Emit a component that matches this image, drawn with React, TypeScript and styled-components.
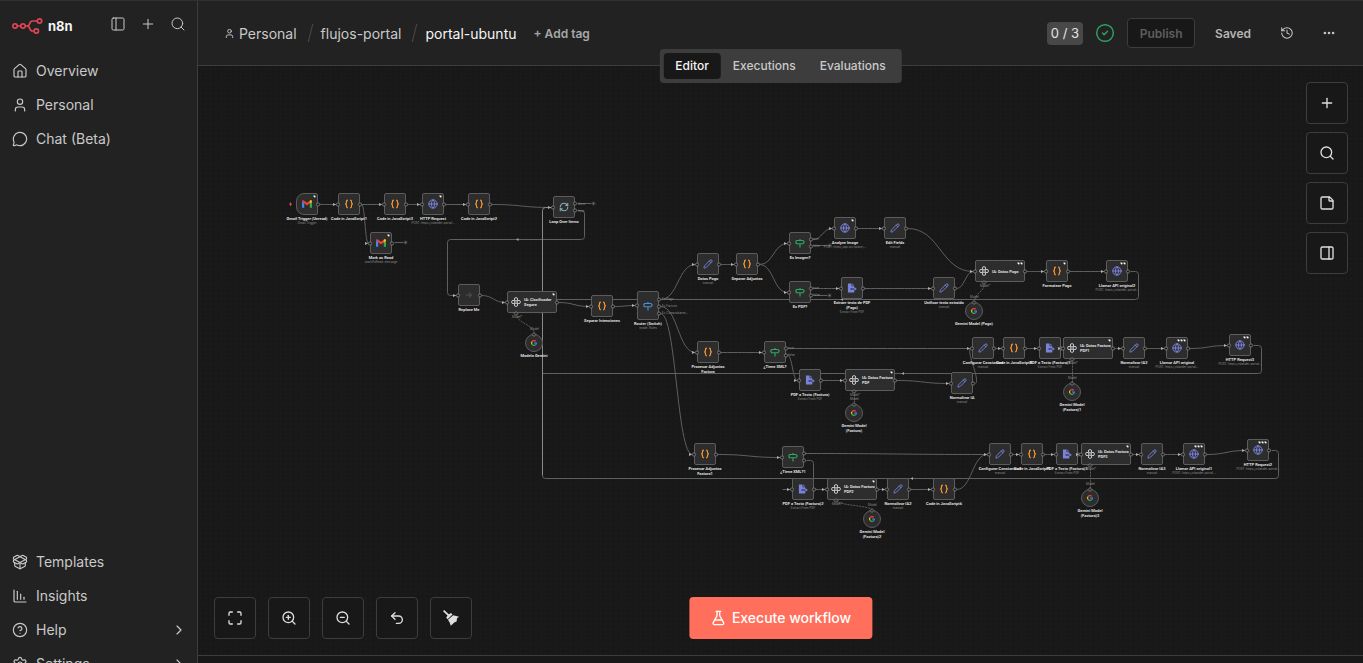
import React from "react";
import styled, { createGlobalStyle, css } from "styled-components";
import {
  ChartColumnDecreasing,
  ChevronRight,
  CircleCheck,
  CircleHelp,
  Ellipsis,
  FlaskConical,
  Globe,
  History,
  House,
  Maximize,
  MessageCircle,
  PackageOpen,
  PanelLeft,
  PanelRight,
  Pencil,
  Plus,
  RefreshCw,
  Search,
  Settings,
  StickyNote,
  Undo2,
  User,
  ZoomIn,
  ZoomOut,
} from "lucide-react";

const color = {
  panel: "#222222",
  canvas: "#181818",
  node: "#2d2d2d",
  border: "#3d3d3d",
  nodeBorder: "#5c5c5c",
  edge: "#5f5f5f",
  text: "#c9c9c9",
  strong: "#f5f5f5",
  muted: "#8d8d8d",
  accent: "#ff6f5c",
};

const GlobalStyle = createGlobalStyle`
  * { box-sizing: border-box; }
  body {
    margin: 0;
    background: ${color.canvas};
    color: ${color.text};
    font-family: Inter, "Liberation Sans", sans-serif;
    font-size: 14px;
    overflow: hidden;
  }
  button { font-family: inherit; padding: 0; cursor: pointer; }
  a { color: inherit; text-decoration: none; }
`;

/* ---------- Shell ---------- */

const Shell = styled.div`
  display: flex;
  height: 100vh;
  border-top: 1px solid #303033;
`;

const Sidebar = styled.aside`
  flex: 0 0 198px;
  background: ${color.panel};
  border-right: 1px solid ${color.border};
  overflow: hidden;
`;

const SidebarContent = styled.div`
  display: flex;
  flex-direction: column;
  min-height: calc(100% + 18px);
`;

const SidebarTop = styled.div`
  display: flex;
  align-items: center;
  height: 53px;
  padding: 0 11px 3px 12px;
`;

const Brand = styled.a`
  display: flex;
  align-items: center;
  gap: 4px;
  color: ${color.strong};
  font-size: 13px;
  font-weight: 700;
`;

const SidebarTools = styled.div`
  display: flex;
  gap: 14px;
  margin-left: auto;
  padding-bottom: 4px;
`;

const IconButton = styled.button`
  display: flex;
  align-items: center;
  justify-content: center;
  width: 16px;
  height: 16px;
  border: 0;
  background: none;
  color: ${color.text};
`;

const NavList = styled.nav<{ $bottom?: boolean }>`
  display: flex;
  flex-direction: column;
  margin-top: ${(p) => (p.$bottom ? "auto" : "0")};
`;

const NavItem = styled.a`
  display: flex;
  align-items: center;
  gap: 8px;
  height: 34px;
  padding: 0 10px 0 12px;
  line-height: 20px;
`;

const NavText = styled.span`
  flex: 1;
`;

const Main = styled.main`
  flex: 1;
  display: flex;
  flex-direction: column;
  min-width: 0;
`;

/* ---------- Header ---------- */

const Header = styled.header`
  position: relative;
  z-index: 2;
  display: flex;
  align-items: center;
  flex: 0 0 65px;
  padding: 0 26px;
  background: ${color.panel};
  border-bottom: 1px solid ${color.border};
`;

const Breadcrumbs = styled.nav`
  display: flex;
  align-items: center;
  gap: 10px;
`;

const Crumb = styled.a<{ $current?: boolean }>`
  display: flex;
  align-items: center;
  gap: 4px;
  color: ${(p) => (p.$current ? color.strong : color.text)};
`;

const Slash = styled.span`
  width: 4px;
  height: 18px;
  border-right: 1px solid #4a4a4a;
  transform: skewX(-14deg);
`;

const AddTag = styled.button`
  margin-left: 7px;
  border: 0;
  background: none;
  color: #a8a8a8;
  font-size: 12px;
  font-weight: 600;
`;

const HeaderActions = styled.div`
  display: flex;
  align-items: center;
  margin-left: auto;
`;

const Counter = styled.span`
  padding: 0 4px;
  border-radius: 4px;
  background: #484848;
  color: #e4e4e4;
  font-size: 13px;
  line-height: 23px;
`;

const Valid = styled.span`
  display: flex;
  margin: 0 12px;
  color: #2fa065;
`;

const Publish = styled.button`
  width: 68px;
  height: 30px;
  border: 1px solid ${color.border};
  border-radius: 4px;
  background: ${color.canvas};
  color: #5e5e5e;
  font-size: 12px;
  font-weight: 600;
`;

const Saved = styled.span`
  margin: 0 28px 0 20px;
  color: #b4b4b4;
  font-size: 12px;
  font-weight: 600;
`;

const MoreSlot = styled.span`
  margin-left: 26px;
`;

const Tabs = styled.div`
  position: absolute;
  top: 48px;
  left: 50%;
  transform: translateX(-50%);
  display: flex;
  padding: 4px;
  border-radius: 4px;
  background: ${color.border};
`;

const Tab = styled.button<{ $active?: boolean }>`
  height: 26px;
  padding: 0 12px 2px;
  border: 0;
  border-radius: 4px;
  background: ${(p) => (p.$active ? color.canvas : "transparent")};
  color: ${(p) => (p.$active ? color.strong : color.text)};
  font-size: 12px;
  font-weight: 500;
`;

/* ---------- Canvas ---------- */

const Canvas = styled.section`
  position: relative;
  flex: 1;
  overflow: hidden;
  background: radial-gradient(circle, #1c1c1c 1px, transparent 1px) 0 0 / 5px 5px ${color.canvas};
`;

const LogsPanel = styled.footer`
  flex: 0 0 8px;
  border-top: 1px solid ${color.border};
  background: ${color.canvas};
`;

const ToolButton = styled.button`
  display: flex;
  align-items: center;
  justify-content: center;
  width: 42px;
  height: 42px;
  border: 1px solid ${color.border};
  border-radius: 4px;
  background: ${color.canvas};
  color: #dedede;
`;

const SideTools = styled.div`
  position: absolute;
  top: 16px;
  right: 15px;
  display: flex;
  flex-direction: column;
  gap: 8px;
`;

const BottomTools = styled.div`
  position: absolute;
  left: 16px;
  bottom: 16px;
  display: flex;
  gap: 12px;
`;

const Execute = styled.button`
  position: absolute;
  bottom: 16px;
  left: 50%;
  transform: translateX(-50%);
  display: flex;
  align-items: center;
  justify-content: center;
  gap: 6px;
  height: 42px;
  padding: 0 21px 1px;
  border: 0;
  border-radius: 4px;
  background: ${color.accent};
  color: #ffffff;
  font-size: 14px;
  font-weight: 500;
  white-space: nowrap;
`;

const PAN = { x: -198, y: -66 };

const Viewport = styled.div`
  position: absolute;
  left: ${PAN.x}px;
  top: ${PAN.y}px;
  width: 1363px;
  height: 663px;
`;

const EdgeLayer = styled.svg`
  position: absolute;
  inset: 0;
  width: 100%;
  height: 100%;
  pointer-events: none;
`;

type Kind =
  | "gmail" | "code" | "http" | "loop" | "noop" | "ai" | "switch"
  | "edit" | "if" | "pdf" | "model";

const shapes = {
  model: css`width: 18px; height: 18px; border-radius: 50%;`,
  ai: css`width: 50px; height: 22px; padding-left: 3px; justify-content: flex-start;`,
  switch: css`width: 22px; height: 29px;`,
  plain: css`width: 22px; height: 22px;`,
};

const NodeBox = styled.div<{ $x: number; $y: number; $kind: Kind; $trigger?: boolean }>`
  position: absolute;
  left: ${(p) => p.$x}px;
  top: ${(p) => p.$y}px;
  display: flex;
  align-items: center;
  justify-content: center;
  border: 1px solid ${color.nodeBorder};
  border-radius: ${(p) => (p.$trigger ? "8px 2px 2px 8px" : "2px")};
  background: ${color.node};
  ${(p) => (p.$kind === "model" || p.$kind === "ai" || p.$kind === "switch" ? shapes[p.$kind] : shapes.plain)}
`;

const tinyTitle = css`
  color: #e8e8e8;
  font-family: Roboto, "Liberation Sans", sans-serif;
  font-size: 4px;
  font-weight: 600;
  line-height: 5px;
  white-space: pre;
`;

const Caption = styled.div`
  position: absolute;
  top: 100%;
  left: 50%;
  transform: translateX(-50%);
  padding-top: 2px;
  text-align: center;
  ${tinyTitle}
`;

const Subtitle = styled.div`
  color: ${color.muted};
  font-family: Inter, "Liberation Sans", sans-serif;
  font-size: 3px;
  font-weight: 400;
`;

const InnerTitle = styled.div`
  margin-left: 3px;
  ${tinyTitle}
`;

const Badges = styled.div`
  position: absolute;
  top: 1px;
  right: 1px;
  display: flex;
  color: #ffffff;
`;

const PortLabel = styled.span<{ $x: number; $y: number }>`
  position: absolute;
  left: ${(p) => p.$x}px;
  top: ${(p) => p.$y}px;
  color: ${color.muted};
  font-size: 3px;
  line-height: 4px;
  white-space: nowrap;
`;

interface FlowNode {
  id: string;
  kind: Kind;
  x: number;
  y: number;
  title: string;
  sub?: string;
  badges?: number;
  outs?: number;
}

const POST = "POST: https://islander-portal...";

const nodes: FlowNode[] = [
  { id: "trigger", kind: "gmail", x: 296, y: 193, title: "Gmail Trigger (Unread)", sub: "Gmail Trigger", badges: 1 },
  { id: "code1", kind: "code", x: 338, y: 193, title: "Code in JavaScript1" },
  { id: "code3", kind: "code", x: 384, y: 193, title: "Code in JavaScript3" },
  { id: "http", kind: "http", x: 422, y: 193, title: "HTTP Request", sub: POST, badges: 1 },
  { id: "code2", kind: "code", x: 468, y: 193, title: "Code in JavaScript2" },
  { id: "mark", kind: "gmail", x: 370, y: 232, title: "Mark as Read", sub: "markAsRead: message", badges: 1 },
  { id: "loop", kind: "loop", x: 553, y: 196, title: "Loop Over Items", outs: 2 },
  { id: "replace", kind: "noop", x: 458, y: 284, title: "Replace Me" },
  { id: "clas", kind: "ai", x: 507, y: 291, title: "IA: Clasificador\nSeguro", badges: 1 },
  { id: "gem", kind: "model", x: 525, y: 334, title: "Modelo Gemini" },
  { id: "sepint", kind: "code", x: 591, y: 295, title: "Separar Intenciones" },
  { id: "router", kind: "switch", x: 637, y: 291, title: "Router (Switch)", sub: "mode: Rules", outs: 3 },
  { id: "pago", kind: "edit", x: 697, y: 253, title: "Datos Pago", sub: "manual" },
  { id: "sepadj", kind: "code", x: 736, y: 253, title: "Separar Adjuntos" },
  { id: "esimg", kind: "if", x: 789, y: 232, title: "Es Imagen?", outs: 2 },
  { id: "analyze", kind: "http", x: 834, y: 217, title: "Analyze Image", sub: "POST: https://api.ocr.space/...", badges: 1 },
  { id: "fields", kind: "edit", x: 884, y: 217, title: "Edit Fields", sub: "manual" },
  { id: "espdf", kind: "if", x: 789, y: 281, title: "Es PDF?", outs: 2 },
  { id: "extraer", kind: "pdf", x: 841, y: 277, title: "Extraer texto de PDF\n(Pago)", sub: "Extract From PDF" },
  { id: "unificar", kind: "edit", x: 933, y: 277, title: "Unificar texto extraido", sub: "manual" },
  { id: "iapago", kind: "ai", x: 975, y: 260, title: "IA: Datos Pago", badges: 2 },
  { id: "gempago", kind: "model", x: 965, y: 302, title: "Gemini Model (Pago)" },
  { id: "format", kind: "code", x: 1046, y: 260, title: "Formatear Pago", badges: 1 },
  { id: "llamar2", kind: "http", x: 1106, y: 260, title: "Llamar API original2", sub: POST, badges: 2 },
  { id: "proc", kind: "code", x: 697, y: 341, title: "Procesar Adjuntos\nFactura" },
  { id: "xml", kind: "if", x: 764, y: 341, title: "¿Tiene XML?", outs: 2 },
  { id: "pdf", kind: "pdf", x: 799, y: 369, title: "PDF a Texto (Factura)", sub: "Extract From PDF" },
  { id: "iapdf", kind: "ai", x: 845, y: 369, title: "IA: Datos Factura\nPDF", badges: 1 },
  { id: "gemfac", kind: "model", x: 845, y: 404, title: "Gemini Model\n(Factura)" },
  { id: "norm", kind: "edit", x: 951, y: 372, title: "Normalizar IA", sub: "manual" },
  { id: "conf", kind: "edit", x: 972, y: 337, title: "Configurar Constantes", sub: "manual" },
  { id: "code4", kind: "code", x: 1003, y: 337, title: "Code in JavaScript4" },
  { id: "pdf1", kind: "pdf", x: 1039, y: 337, title: "PDF a Texto (Factura)1", sub: "Extract From PDF" },
  { id: "iapdf1", kind: "ai", x: 1063, y: 337, title: "IA: Datos Factura\nPDF1", badges: 1 },
  { id: "gemfac1", kind: "model", x: 1063, y: 383, title: "Gemini Model\n(Factura)1" },
  { id: "norm2", kind: "edit", x: 1123, y: 337, title: "Normalizar IA2", sub: "manual" },
  { id: "llamar", kind: "http", x: 1166, y: 337, title: "Llamar API original", sub: POST, badges: 3 },
  { id: "http3", kind: "http", x: 1229, y: 334, title: "HTTP Request3", sub: POST, badges: 2 },
  { id: "proc1", kind: "code", x: 694, y: 443, title: "Procesar Adjuntos\nFactura1" },
  { id: "xml1", kind: "if", x: 782, y: 446, title: "¿Tiene XML?1", outs: 2 },
  { id: "pdf2", kind: "pdf", x: 792, y: 478, title: "PDF a Texto (Factura)2", sub: "Extract From PDF" },
  { id: "iapdf2", kind: "ai", x: 827, y: 478, title: "IA: Datos Factura\nPDF2", badges: 1 },
  { id: "gemfac2", kind: "model", x: 863, y: 510, title: "Gemini Model\n(Factura)2" },
  { id: "norm12", kind: "edit", x: 887, y: 478, title: "Normalizar IA2", sub: "manual" },
  { id: "code6", kind: "code", x: 933, y: 478, title: "Code in JavaScript6" },
  { id: "conf1", kind: "edit", x: 989, y: 443, title: "Configurar Constantes1", sub: "manual" },
  { id: "code5", kind: "code", x: 1021, y: 443, title: "Code in JavaScript5" },
  { id: "pdf3", kind: "pdf", x: 1056, y: 443, title: "PDF a Texto (Factura)3", sub: "Extract From PDF" },
  { id: "iapdf3", kind: "ai", x: 1081, y: 443, title: "IA: Datos Factura\nPDF3", badges: 1 },
  { id: "gemfac3", kind: "model", x: 1081, y: 489, title: "Gemini Model\n(Factura)3" },
  { id: "norm3", kind: "edit", x: 1141, y: 443, title: "Normalizar IA3", sub: "manual" },
  { id: "llamar1", kind: "http", x: 1183, y: 443, title: "Llamar API original1", sub: POST, badges: 3 },
  { id: "http2", kind: "http", x: 1247, y: 439, title: "HTTP Request2", sub: POST, badges: 3 },
];

const byId = Object.fromEntries(nodes.map((n) => [n.id, n]));

/* [source, target, output index] */
const links: [string, string, number?][] = [
  ["trigger", "code1"], ["code1", "code3"], ["code3", "http"], ["http", "code2"], ["code2", "loop"],
  ["code1", "mark"], ["replace", "clas"], ["clas", "sepint"], ["sepint", "router"],
  ["router", "pago", 0], ["router", "proc", 1], ["router", "proc1", 2],
  ["pago", "sepadj"], ["sepadj", "esimg"], ["sepadj", "espdf"],
  ["esimg", "analyze", 0], ["analyze", "fields"], ["fields", "iapago"],
  ["espdf", "extraer", 0], ["extraer", "unificar"], ["unificar", "iapago"],
  ["iapago", "format"], ["format", "llamar2"],
  ["proc", "xml"], ["xml", "conf", 0], ["xml", "pdf", 1], ["pdf", "iapdf"], ["iapdf", "norm"],
  ["conf", "code4"], ["code4", "pdf1"], ["iapdf1", "norm2"], ["norm2", "llamar"], ["llamar", "http3"],
  ["proc1", "xml1"], ["xml1", "conf1", 0], ["pdf2", "iapdf2"], ["iapdf2", "norm12"],
  ["norm12", "code6"], ["code6", "conf1"],
  ["conf1", "code5"], ["code5", "pdf3"], ["iapdf3", "norm3"], ["norm3", "llamar1"], ["llamar1", "http2"],
];

const modelLinks: [string, string][] = [
  ["clas", "gem"], ["iapago", "gempago"], ["iapdf", "gemfac"],
  ["iapdf1", "gemfac1"], ["iapdf2", "gemfac2"], ["iapdf3", "gemfac3"],
];

/* Orthogonal return paths that do not follow the plain curve. */
const returns = [
  "M577 210 H581 Q584 210 584 213 V236 Q584 239 581 239 H450 Q447 239 447 242 V292 Q447 295 450 295 H456",
  "M1130 271 H1135 Q1138 271 1138 274 V296 Q1138 299 1135 299 H542",
  "M1253 345 H1258 Q1261 345 1261 348 V370 Q1261 373 1258 373 H542",
  "M1271 450 H1275 Q1278 450 1278 453 V475 Q1278 478 1275 478 H545 Q542 478 542 475",
  "M806 460 H810 Q813 460 813 463 V478",
  "M782 489 H790",
  "M975 383 C980 380 966 352 970 348",
];

const stubs: [number, number, number][] = [
  [577, 203, 593], [394, 242, 405], [813, 245, 829], [813, 295, 829],
];

const portLabels: [number, number, string][] = [
  [662, 297, "Es Pago"], [662, 304, "Es Factura"], [662, 311, "Es Comprobante..."],
  [578, 202, "done"], [578, 209, "loop"],
  [813, 237, "true"], [813, 244, "false"], [813, 286, "true"], [813, 293, "false"],
  [788, 346, "true"], [788, 353, "false"],
];

const height = (n: FlowNode) => (n.kind === "switch" ? 29 : n.kind === "model" ? 18 : 22);
const width = (n: FlowNode) => (n.kind === "ai" ? 50 : n.kind === "model" ? 18 : 22);
const inY = (n: FlowNode) => n.y + Math.floor(height(n) / 2);
const outY = (n: FlowNode, i = 0) =>
  n.outs === 3 ? n.y + 8 + i * 7 : n.outs === 2 ? n.y + 7 + i * 7 : inY(n);

function curve(a: FlowNode, b: FlowNode, i?: number) {
  const x1 = a.x + width(a) + 1;
  const y1 = outY(a, i);
  const x2 = b.x - 2;
  const y2 = inY(b);
  const mid = (x1 + x2) / 2;
  return `M${x1} ${y1} C${mid} ${y1} ${mid} ${y2} ${x2} ${y2}`;
}

function Edges() {
  return (
    <EdgeLayer fill="none" stroke={color.edge}>
      <g transform="translate(.5 .5)">
        {links.map(([a, b, i]) => (
          <path key={a + b} d={curve(byId[a], byId[b], i)} />
        ))}
        {returns.map((d) => (
          <path key={d} d={d} />
        ))}
        <path d="M542 475 V210 Q542 207 545 207 H551" stroke="#8a8a8a" />
        {modelLinks.map(([a, b]) => {
          const x1 = byId[a].x + 9;
          const y1 = byId[a].y + 22;
          const x2 = byId[b].x + 9;
          const y2 = byId[b].y;
          const m = (y1 + y2) / 2;
          return <path key={a} strokeDasharray="2 1" d={`M${x1} ${y1} C${x1} ${m} ${x2} ${m} ${x2} ${y2}`} />;
        })}
        {stubs.map(([x1, y, x2]) => (
          <g key={`${x1}-${y}`}>
            <path d={`M${x1} ${y}H${x2 - 2}`} />
            <rect x={x2 - 2} y={y - 2} width="4" height="4" rx="1" fill="#303030" stroke="none" />
            <path d={`M${x2 - 1} ${y}h2M${x2} ${y - 1}v2`} stroke="#909090" strokeWidth=".6" />
          </g>
        ))}
        <g fill="#a5a5a5" stroke="none">
          <path d="M515.500 239l2.500-1.500v3z" />
          <path d="M840 299l2.500-1.500v3z" />
          <path d="M901 373l2.500-1.500v3z" />
          <path d="M910 478l2.500-1.500v3z" />
        </g>
      </g>
    </EdgeLayer>
  );
}

function Handles() {
  return (
    <EdgeLayer fill={color.canvas} stroke="#858585" strokeWidth=".8">
      <g transform="translate(0 .5)">
        {nodes.map((n) => {
          if (n.kind === "model") {
            return <path key={n.id} d={`M${n.x + 9} ${n.y - 2}l2 2-2 2-2-2z`} fill={color.node} />;
          }
          const outs = Array.from({ length: n.outs ?? 1 }, (_, i) => outY(n, i));
          return (
            <g key={n.id}>
              {n.id !== "trigger" && (
                <>
                  <circle cx={n.x} cy={inY(n)} r="1.600" />
                  <path d={`M${n.x - 2} ${inY(n)}l-3-1.600v3.200z`} fill="#b0b0b0" stroke="none" />
                </>
              )}
              {outs.map((y) => (
                <circle key={y} cx={n.x + width(n)} cy={y} r="1.600" />
              ))}
              {n.kind === "ai" && <path d={`M${n.x + 9} ${n.y + 20}l2 2-2 2-2-2z`} fill={color.node} />}
            </g>
          );
        })}
        <path d="M291 201l-2 3h1.500l-.5 2.300 2-3h-1.500z" fill={color.accent} stroke="none" />
      </g>
    </EdgeLayer>
  );
}

const indigo = "#7a83dc";

function NodeIcon({ kind }: { kind: Kind }) {
  switch (kind) {
    case "gmail":
      return (
        <svg width="10" height="8" viewBox="0 0 20 15">
          <path d="M0 2v13h4.500V5.500z" fill="#4285f4" />
          <path d="M20 2v13h-4.500V5.500z" fill="#34a853" />
          <path d="M0 2.500C0 .3 2.500-.6 4.300.8L10 5l5.700-4.200C17.500-.6 20 .3 20 2.500L10 10.500z" fill="#ea4335" />
          <path d="M15.500 1v6L20 3.500v-1C20 .2 17.500-.6 15.500 1z" fill="#fbbc04" />
        </svg>
      );
    case "code":
      return (
        <svg width="10" height="10" viewBox="0 0 22 22" fill="none" stroke="#ff9b33" strokeWidth="2.600">
          <path d="M8.500 2.500C5.500 2.500 5.500 4 5.500 6.500S5 11 2.500 11c2.500 0 3 2 3 4.500s0 4 3 4M13.500 2.500c3 0 3 1.500 3 4s.5 4.500 3 4.500c-2.500 0-3 2-3 4.500s0 4-3 4" />
        </svg>
      );
    case "http":
      return <Globe size={10} color={indigo} strokeWidth={2.4} />;
    case "edit":
      return <Pencil size={10} color={indigo} strokeWidth={2.2} />;
    case "loop":
      return <RefreshCw size={10} color="#86a9bd" strokeWidth={2.6} />;
    case "noop":
      return (
        <svg width="8" height="8" viewBox="0 0 16 16" fill="none" stroke="#484848" strokeWidth="2.500">
          <path d="M2 8h11M8 3l5 5-5 5" />
        </svg>
      );
    case "if":
    case "switch":
      return (
        <svg
          width="10" height="10" viewBox="0 0 20 20" fill="none" strokeWidth="2.300" strokeLinejoin="round"
          stroke={kind === "if" ? "#2fa866" : "#4a8fd6"}
        >
          <path d="M3 5h13l2.500 3-2.500 3.500H3L1.500 8zM10 2v3M10 11.500V19" />
        </svg>
      );
    case "pdf":
      return (
        <svg width="10" height="10" viewBox="0 0 22 22" fill={indigo}>
          <path d="M2 1h8v6h6v4H8v4h8v6H2z" />
          <path d="M11.500 1L16 5.500h-4.500zM9.500 12h7V9l5 4-5 4v-3h-7z" />
        </svg>
      );
    case "ai":
      return (
        <svg width="10" height="10" viewBox="0 0 20 20" fill="none" stroke="#ececec" strokeWidth="1.900">
          <rect x="7" y="1.500" width="6" height="6" rx="2" />
          <rect x="7" y="12.500" width="6" height="6" rx="2" />
          <rect x="1.500" y="7" width="6" height="6" rx="2" />
          <rect x="12.500" y="7" width="6" height="6" rx="2" />
        </svg>
      );
    case "model":
      return (
        <svg width="6" height="6" viewBox="0 0 20 20" fill="none" strokeWidth="4">
          <path d="M15.700 4.300A8 8 0 0 0 3 6.200" stroke="#ea4335" />
          <path d="M3 6.200a8 8 0 0 0 0 7.600" stroke="#fbbc04" />
          <path d="M3 13.800A8 8 0 0 0 15 16.200" stroke="#34a853" />
          <path d="M15 16.200A8 8 0 0 0 18 10h-8" stroke="#4285f4" />
        </svg>
      );
  }
}

function Badge() {
  return (
    <svg width="3" height="3" viewBox="0 0 8 8">
      <path d="M1 1h5v3h2L5 7 2 4H1z" fill="currentColor" />
    </svg>
  );
}

function NodeView({ node }: { node: FlowNode }) {
  const inner = node.kind === "ai";
  return (
    <NodeBox $x={node.x} $y={node.y} $kind={node.kind} $trigger={node.id === "trigger"}>
      <NodeIcon kind={node.kind} />
      {inner && <InnerTitle>{node.title}</InnerTitle>}
      {node.badges && (
        <Badges>
          {Array.from({ length: node.badges }, (_, i) => (
            <Badge key={i} />
          ))}
        </Badges>
      )}
      {!inner && (
        <Caption>
          {node.title}
          {node.sub && <Subtitle>{node.sub}</Subtitle>}
        </Caption>
      )}
    </NodeBox>
  );
}

function Graph() {
  return (
    <Viewport>
      <Edges />
      {nodes.map((n) => (
        <NodeView key={n.id} node={n} />
      ))}
      <Handles />
      {portLabels.map(([x, y, text]) => (
        <PortLabel key={`${x}-${y}`} $x={x} $y={y}>{text}</PortLabel>
      ))}
      {modelLinks.map(([a, b]) => (
        <React.Fragment key={a}>
          <PortLabel $x={byId[a].x + 5} $y={byId[a].y + 24}>Model*</PortLabel>
          <PortLabel $x={byId[b].x + 5} $y={byId[b].y - 7}>Model</PortLabel>
        </React.Fragment>
      ))}
    </Viewport>
  );
}

function Logo() {
  return (
    <svg width="32" height="18" viewBox="0 0 32 18" fill="none" stroke="#dd4556" strokeWidth="1.700">
      <circle cx="3" cy="9" r="2.200" />
      <circle cx="11" cy="9" r="2.200" />
      <circle cx="27.500" cy="4" r="2.200" />
      <circle cx="24.300" cy="14" r="2.200" />
      <path d="M5.200 9h3.600M13.200 9H15c4 0 1.500-5 5.500-5h4.800M15 9c4 0 1.500 5 5.500 5h1.600" />
    </svg>
  );
}

function Broom() {
  return (
    <svg width="18" height="18" viewBox="0 0 18 18" fill="currentColor">
      <path d="M1 2.200L2.200 1l4.600 4.200L9 4l1.500 1.500L5.600 10.200 4.200 8.800l1.300-2.300z" />
      <path d="M11.200 6.200l5.800 1.500-2 1.600-.4 3.200-2 .8-3.800 3.500-1.200-3.300-1.600-2.700z" />
    </svg>
  );
}

const mainNav = [
  { label: "Overview", Icon: House },
  { label: "Personal", Icon: User },
  { label: "Chat (Beta)", Icon: MessageCircle },
];

const bottomNav = [
  { label: "Templates", Icon: PackageOpen },
  { label: "Insights", Icon: ChartColumnDecreasing },
  { label: "Help", Icon: CircleHelp, more: true },
  { label: "Settings", Icon: Settings, more: true },
];

export default function App() {
  return (
    <>
      <GlobalStyle />
      <Shell>
        <Sidebar>
          <SidebarContent>
            <SidebarTop>
              <Brand href="#home">
                <Logo />
                <span>n8n</span>
              </Brand>
              <SidebarTools>
                <IconButton aria-label="Collapse sidebar"><PanelLeft size={16} strokeWidth={1.5} /></IconButton>
                <IconButton aria-label="Create"><Plus size={16} strokeWidth={1.5} /></IconButton>
                <IconButton aria-label="Search"><Search size={16} strokeWidth={1.5} /></IconButton>
              </SidebarTools>
            </SidebarTop>
            <NavList>
              {mainNav.map(({ label, Icon }) => (
                <NavItem key={label} href="#nav">
                  <Icon size={16} strokeWidth={1.75} />
                  <NavText>{label}</NavText>
                </NavItem>
              ))}
            </NavList>
            <NavList $bottom>
              {bottomNav.map(({ label, Icon, more }) => (
                <NavItem key={label} href="#nav">
                  <Icon size={16} strokeWidth={1.75} />
                  <NavText>{label}</NavText>
                  {more && <ChevronRight size={16} strokeWidth={1.75} />}
                </NavItem>
              ))}
            </NavList>
          </SidebarContent>
        </Sidebar>
        <Main>
          <Header>
            <Breadcrumbs aria-label="Breadcrumb">
              <Crumb href="#personal"><User size={11} />Personal</Crumb>
              <Slash />
              <Crumb href="#folder">flujos-portal</Crumb>
              <Slash />
              <Crumb href="#workflow" $current>portal-ubuntu</Crumb>
              <AddTag>+ Add tag</AddTag>
            </Breadcrumbs>
            <HeaderActions>
              <Counter>0 / 3</Counter>
              <Valid><CircleCheck size={20} strokeWidth={1.75} /></Valid>
              <Publish disabled>Publish</Publish>
              <Saved>Saved</Saved>
              <IconButton aria-label="History"><History size={14} strokeWidth={1.75} /></IconButton>
              <MoreSlot>
                <IconButton aria-label="More"><Ellipsis size={14} strokeWidth={2.5} /></IconButton>
              </MoreSlot>
            </HeaderActions>
            <Tabs role="tablist">
              <Tab role="tab" aria-selected $active>Editor</Tab>
              <Tab role="tab">Executions</Tab>
              <Tab role="tab">Evaluations</Tab>
            </Tabs>
          </Header>
          <Canvas>
            <Graph />
            <SideTools>
              <ToolButton aria-label="Add node"><Plus size={16} /></ToolButton>
              <ToolButton aria-label="Find"><Search size={16} /></ToolButton>
              <ToolButton aria-label="Add note"><StickyNote size={16} /></ToolButton>
              <ToolButton aria-label="Toggle panel"><PanelRight size={16} /></ToolButton>
            </SideTools>
            <BottomTools>
              <ToolButton aria-label="Fit view"><Maximize size={16} /></ToolButton>
              <ToolButton aria-label="Zoom in"><ZoomIn size={16} /></ToolButton>
              <ToolButton aria-label="Zoom out"><ZoomOut size={16} /></ToolButton>
              <ToolButton aria-label="Undo"><Undo2 size={16} /></ToolButton>
              <ToolButton aria-label="Tidy up"><Broom /></ToolButton>
            </BottomTools>
            <Execute>
              <FlaskConical size={16} />
              Execute workflow
            </Execute>
          </Canvas>
          <LogsPanel />
        </Main>
      </Shell>
    </>
  );
}
